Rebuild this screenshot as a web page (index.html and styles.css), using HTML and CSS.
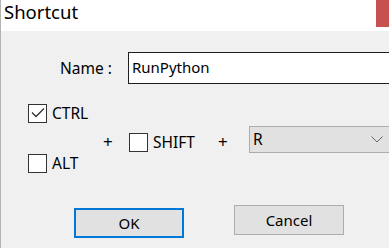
FILE: index.html
```html
<!DOCTYPE html>
<html>
<head>
<meta charset="utf-8">
<link rel="stylesheet" href="styles.css">
</head>
<body>
<div class="window">
  <div class="titlebar">
    <span class="title">Shortcut</span>
    <span class="close">✕</span>
  </div>
  <div class="content">
    <div class="name-row">
      <label class="name-label">Name :</label>
      <div class="textbox">RunPython</div>
    </div>
    <div class="keys-row">
      <div class="mods">
        <div class="check">
          <span class="box"><svg width="17" height="17" viewBox="0 0 17 17"><polyline points="3,7.5 7,11.5 15,3.5" fill="none" stroke="#333" stroke-width="1.3"/></svg></span>
          <span class="check-text">CTRL</span>
        </div>
        <div class="check">
          <span class="box"></span>
          <span class="check-text">ALT</span>
        </div>
      </div>
      <span class="plus plus1">+</span>
      <div class="check shift">
        <span class="box"></span>
        <span class="check-text">SHIFT</span>
      </div>
      <span class="plus plus2">+</span>
      <div class="select">
        <span class="select-value">R</span>
        <svg class="chevron" width="12" height="7" viewBox="0 0 12 7"><polyline points="0.5,0.5 6,6 11.5,0.5" fill="none" stroke="#666" stroke-width="1"/></svg>
      </div>
    </div>
    <div class="buttons">
      <button class="btn btn-ok">OK</button>
      <button class="btn btn-cancel">Cancel</button>
    </div>
  </div>
</div>
</body>
</html>
```

FILE: styles.css
```css
html, body {
  margin: 0;
  padding: 0;
  width: 389px;
  height: 248px;
  overflow: hidden;
  background: #f0f0f0;
}

.window {
  width: 420px;
  height: 248px;
  border-left: 1px solid #b4b4b4;
  font-family: "Noto Sans", sans-serif;
  font-size: 15.5px;
  color: #000;
  background: #f0f0f0;
}

.titlebar {
  height: 31px;
  background: #fff;
  display: flex;
  align-items: flex-start;
  justify-content: space-between;
}

.title {
  font-size: 18.5px;
  line-height: 24px;
  padding-left: 3px;
}

.close {
  width: 45px;
  height: 27px;
  background: #c75050;
  color: #fff;
  font-size: 13px;
  line-height: 27px;
  text-align: center;
}

.content {
  background: #f0f0f0;
}

.name-row {
  display: flex;
  align-items: center;
  padding-top: 21px;
  padding-left: 59px;
}

.name-label {
  width: 68px;
}

.textbox {
  width: 273px;
  height: 32px;
  box-sizing: border-box;
  border: 1px solid #1e1e1e;
  background: #fff;
  padding-left: 3px;
  line-height: 29px;
  font-size: 15px;
}

.keys-row {
  display: flex;
  align-items: flex-start;
  padding-top: 20px;
  padding-left: 27px;
}

.mods {
  width: 75px;
  display: flex;
  flex-direction: column;
  gap: 31px;
}

.check {
  display: flex;
  align-items: center;
  gap: 5px;
  height: 19px;
}

.box {
  width: 19px;
  height: 19px;
  box-sizing: border-box;
  border: 1px solid #333;
  background: #fff;
  display: flex;
  align-items: center;
  justify-content: center;
}

.box svg {
  display: block;
}

.check-text {
  line-height: 19px;
}

.plus {
  font-size: 17px;
  line-height: 19px;
  margin-top: 28px;
}

.plus1 {
  width: 26px;
}

.shift {
  width: 89px;
  margin-top: 29px;
}

.plus2 {
  width: 31px;
}

.select {
  width: 151px;
  height: 27px;
  box-sizing: border-box;
  margin-top: 22px;
  border: 1px solid #adadad;
  background: #e1e1e1;
  display: flex;
  align-items: center;
  padding-left: 3px;
  padding-right: 16px;
}

.select-value {
  flex: 1;
  line-height: 25px;
}

.chevron {
  display: block;
}

.buttons {
  display: flex;
  align-items: flex-start;
  padding-top: 32px;
  padding-left: 73px;
  gap: 50px;
}

.btn {
  width: 110px;
  height: 30px;
  box-sizing: border-box;
  background: #e1e1e1;
  font-family: "Noto Sans", sans-serif;
  font-size: 15px;
  color: #000;
  padding: 0;
  margin: 0;
}

.btn-ok {
  border: 2px solid #0078d7;
  margin-top: 3px;
}

.btn-cancel {
  border: 1px solid #adadad;
}
```
